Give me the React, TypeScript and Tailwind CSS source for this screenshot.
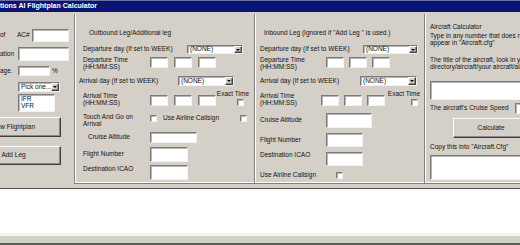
import type { ReactNode } from "react";

const sunken =
  "bg-white border border-t-[#7a7a7a] border-l-[#7a7a7a] border-b-[#f2f2f2] border-r-[#f2f2f2] shadow-[inset_1px_1px_0_#b8b6b0]";
const raised =
  "bg-[#d4d0c8] border border-t-white border-l-white border-b-[#404040] border-r-[#404040] shadow-[inset_-1px_-1px_0_#8a8882]";

function Field({ className = "" }: { className?: string }) {
  return <div className={`${sunken} shrink-0 ${className}`} />;
}

function Check({ className = "" }: { className?: string }) {
  return <div className={`${sunken} shrink-0 w-[7px] h-[7px] ${className}`} />;
}

function Drop({ label, className = "" }: { label: string; className?: string }) {
  return (
    <div className={`${sunken} shrink-0 flex items-stretch ${className}`}>
      <span className="flex-1 pl-[2px] flex items-center whitespace-nowrap overflow-hidden">{label}</span>
      <span className={`${raised} w-[8px] flex items-center justify-center`}>
        <span className="border-x-[2px] border-t-[2px] border-x-transparent border-t-black" />
      </span>
    </div>
  );
}

function Text({ children, className = "" }: { children: ReactNode; className?: string }) {
  return <div className={`whitespace-nowrap shrink-0 ${className}`}>{children}</div>;
}

function Times({ gap }: { gap: string }) {
  return (
    <div className={`flex ${gap}`}>
      <Field className="w-[18px] h-[11px]" />
      <Field className="w-[18px] h-[11px]" />
      <Field className="w-[18px] h-[11px]" />
    </div>
  );
}

function LeftPanel() {
  return (
    <div className="w-[74px] shrink-0 flex flex-col">
      <div className="mt-[17px] h-[13px] flex items-center">
        <Text className="w-[17px]">of</Text>
        <Text className="w-[15px]">AC#</Text>
        <Field className="w-[37px] h-[13px]" />
      </div>
      <div className="mt-[5px] h-[14px] flex items-center">
        <Text className="w-[18px]">ation</Text>
        <Field className="w-[51px] h-[14px]" />
      </div>
      <div className="mt-[5px] h-[10px] flex items-center">
        <Text className="w-[18px]">age.</Text>
        <Field className="w-[32px] h-[10px]" />
        <Text className="ml-[2px]">%</Text>
      </div>
      <Drop label="Pick one..." className="mt-[6px] ml-[18px] w-[42px] h-[10px]" />
      <div className={`${sunken} mt-[2px] ml-[18px] w-[37px] h-[18px] pl-[2px] pt-[1px]`}>
        <div>IFR</div>
        <div>VFR</div>
      </div>
      <div className={`${raised} mt-[5px] ml-[-34px] w-[95px] h-[20px] flex items-center justify-center`}>
        New Flightplan
      </div>
      <div className={`${raised} mt-[9px] ml-[-34px] w-[95px] h-[19px] flex items-center justify-center`}>
        Add Leg
      </div>
    </div>
  );
}

function Outbound() {
  return (
    <div className="w-[180px] shrink-0 h-[170px] mt-[2px] border-l border-b border-[#808080] shadow-[inset_1px_-1px_0_#ffffff] flex flex-col">
      <Text className="mt-[16px] h-[6px] pl-[14px]">Outbound Leg/Additional leg</Text>
      <div className="mt-[9px] h-[9px] flex items-center pl-[8px]">
        <Text className="w-[104px]">Departure day (If set to WEEK)</Text>
        <Drop label="(NONE)" className="w-[56px] h-[9px]" />
      </div>
      <div className="mt-[3px] h-[12px] flex items-start pl-[8px]">
        <div className="w-[67px] shrink-0">
          <div className="whitespace-nowrap">Departure Time</div>
          <div>(HH:MM:SS)</div>
        </div>
        <Times gap="gap-[6px]" />
      </div>
      <div className="mt-[7px] h-[10px] flex items-center pl-[4px]">
        <Text className="w-[99px]">Arrival day (If set to WEEK)</Text>
        <Drop label="(NONE)" className="w-[56px] h-[10px]" />
      </div>
      <div className="mt-[7px] h-[13px] flex items-start pl-[8px]">
        <div className="w-[67px] shrink-0">
          <div className="whitespace-nowrap">Arrival Time</div>
          <div>(HH:MM:SS)</div>
        </div>
        <div className="mt-[2px]">
          <Times gap="gap-[6px]" />
        </div>
        <div className="flex flex-col items-end w-[33px] -mt-[2px]">
          <Text>Exact Time</Text>
          <Check className="mt-[1px] mr-[5px]" />
        </div>
      </div>
      <div className="mt-[8px] h-[12px] flex items-start pl-[8px]">
        <div className="w-[67px] shrink-0">
          <div className="whitespace-nowrap">Touch And Go on</div>
          <div>Arrival</div>
        </div>
        <Check className="mt-[1px]" />
        <Text className="ml-[6px] w-[77px] mt-[1px]">Use Airline Callsign</Text>
        <Check className="mt-[1px]" />
      </div>
      <div className="mt-[6px] h-[11px] flex items-center pl-[13px]">
        <Text className="w-[62px]">Cruise Altitude</Text>
        <Field className="w-[47px] h-[11px]" />
      </div>
      <div className="mt-[4px] h-[15px] flex items-center pl-[8px]">
        <Text className="w-[67px]">Flight Number</Text>
        <Field className="w-[38px] h-[15px]" />
      </div>
      <div className="mt-[3px] h-[15px] flex items-start pl-[8px]">
        <Text className="w-[67px] pt-[1px]">Destination ICAO</Text>
        <Field className="w-[38px] h-[15px]" />
      </div>
    </div>
  );
}

function Inbound() {
  return (
    <div className="w-[170px] shrink-0 h-[170px] mt-[2px] border-l border-b border-[#808080] shadow-[inset_1px_-1px_0_#ffffff] flex flex-col">
      <Text className="mt-[16px] h-[6px] pl-[9px]">Inbound Leg (Ignored if ''Add Leg '' is used.)</Text>
      <div className="mt-[9px] h-[9px] flex items-center pl-[5px]">
        <Text className="w-[103px]">Departure day (If set to WEEK)</Text>
        <Drop label="(NONE)" className="w-[55px] h-[9px]" />
      </div>
      <div className="mt-[3px] h-[12px] flex items-start pl-[5px]">
        <div className="w-[66px] shrink-0">
          <div className="whitespace-nowrap">Departure Time</div>
          <div>(HH:MM:SS)</div>
        </div>
        <Times gap="gap-[5px]" />
      </div>
      <div className="mt-[7px] h-[10px] flex items-center pl-[5px]">
        <Text className="w-[100px]">Arrival day (If set to WEEK)</Text>
        <Drop label="(NONE)" className="w-[57px] h-[10px]" />
      </div>
      <div className="mt-[7px] h-[13px] flex items-start pl-[5px]">
        <div className="w-[61px] shrink-0">
          <div className="whitespace-nowrap">Arrival Time</div>
          <div>(HH:MM:SS)</div>
        </div>
        <div className="mt-[2px]">
          <Times gap="gap-[5px]" />
        </div>
        <div className="flex flex-col items-end w-[35px] -mt-[2px]">
          <Text>Exact Time</Text>
          <Check className="mt-[1px] mr-[2px]" />
        </div>
      </div>
      <div className="mt-[7px] h-[15px] flex items-center pl-[5px]">
        <Text className="w-[66px]">Cruise Altitude</Text>
        <Field className="w-[46px] h-[15px]" />
      </div>
      <div className="mt-[5px] h-[14px] flex items-center pl-[5px]">
        <Text className="w-[66px]">Flight Number</Text>
        <Field className="w-[37px] h-[14px]" />
      </div>
      <div className="mt-[5px] h-[14px] flex items-start pl-[5px]">
        <Text className="w-[66px]">Destination ICAO</Text>
        <Field className="w-[37px] h-[14px]" />
      </div>
      <div className="mt-[6px] h-[7px] flex items-center pl-[5px]">
        <Text className="w-[76px]">Use Airline Callsign</Text>
        <Check />
      </div>
    </div>
  );
}

function Calculator() {
  return (
    <div className="w-[120px] shrink-0 h-[170px] mt-[2px] border-l border-b border-[#808080] shadow-[inset_1px_-1px_0_#ffffff] flex flex-col pl-[5px]">
      <Text className="mt-[10px] h-[6px]">Aircraft Calculator</Text>
      <div className="mt-[3px] whitespace-nowrap">
        <div>Type in any number that does not</div>
        <div>appear in "Aircraft.cfg"</div>
      </div>
      <div className="mt-[11px] whitespace-nowrap">
        <div>The title of the aircraft, look in your</div>
        <div>directory/aircraft/your aircraft/aircraft.cfg</div>
      </div>
      <Field className="mt-[11px] w-[100px] h-[19px]" />
      <div className="mt-[3px] h-[11px] flex items-center">
        <Text className="w-[85px]">The aircraft's Cruise Speed</Text>
        <Field className="w-[20px] h-[11px]" />
      </div>
      <div className={`${raised} mt-[4px] ml-[23px] w-[76px] h-[20px] shrink-0 flex items-center justify-center`}>
        Calculate
      </div>
      <Text className="mt-[6px] h-[6px]">Copy this into "Aircraft.Cfg"</Text>
      <Field className="mt-[5px] w-[100px] h-[25px]" />
    </div>
  );
}

export default function App() {
  return (
    <div className="w-[520px] h-[245px] overflow-hidden bg-white flex flex-col font-['Liberation_Sans',Arial,sans-serif] text-[6.5px] leading-[6.5px] text-[#111]">
      <div className="h-[189px] shrink-0 bg-[#d4d0c8] border-b border-[#505050] flex flex-col">
        <div className="h-[12px] shrink-0 bg-[#0a1472] border-t border-[#6c6fa0] flex items-center font-bold text-white text-[7px] whitespace-nowrap">
          tions AI Flightplan Calculator
        </div>
        <div className="flex flex-1">
          <LeftPanel />
          <Outbound />
          <Inbound />
          <Calculator />
        </div>
      </div>
      <div className="h-[44px] shrink-0 bg-white" />
      <div className="h-[3px] shrink-0 bg-[#f4f3ef]" />
      <div className="flex-1 bg-[#d4d0c8] border-b-2 border-[#5a5a5a]" />
    </div>
  );
}
